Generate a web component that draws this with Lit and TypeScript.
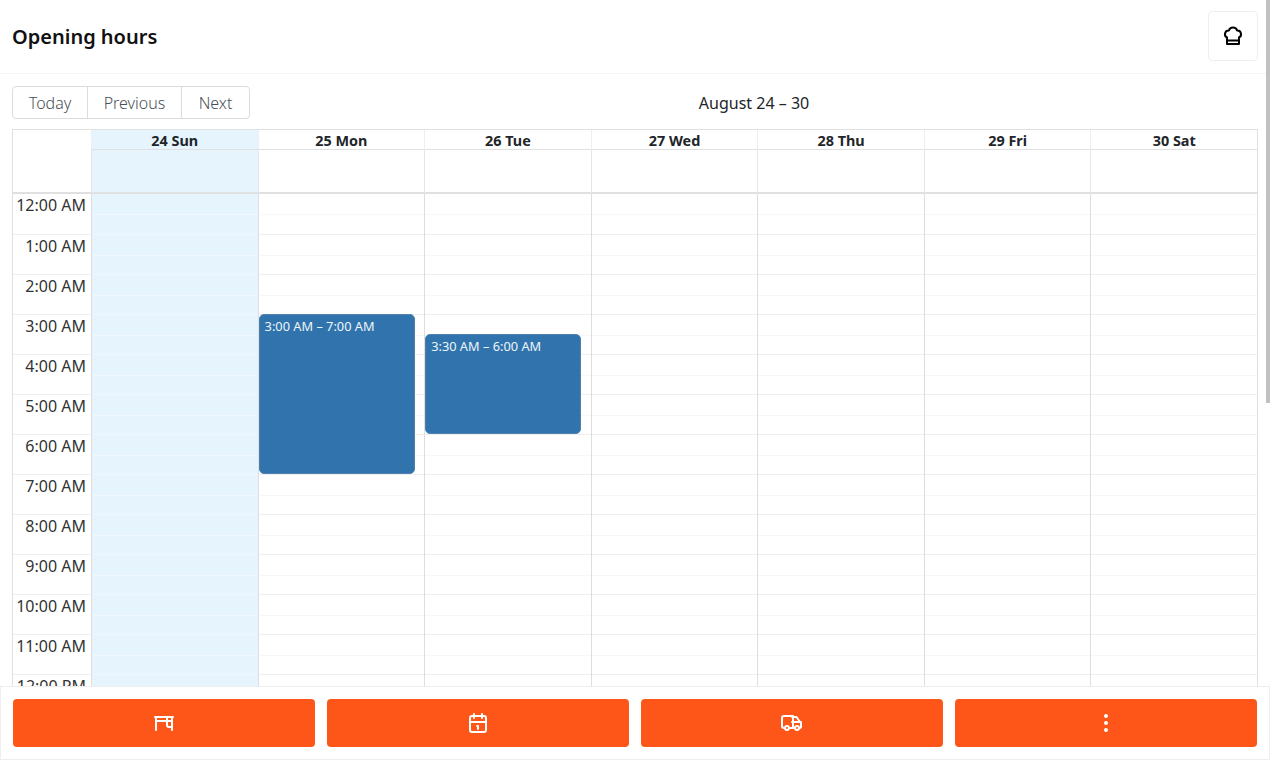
import { LitElement, html, css, svg } from "lit";
import { customElement } from "lit/decorators.js";

const days = ["24 Sun", "25 Mon", "26 Tue", "27 Wed", "28 Thu", "29 Fri", "30 Sat"];
const hours = ["12:00 AM","1:00 AM","2:00 AM","3:00 AM","4:00 AM","5:00 AM","6:00 AM","7:00 AM","8:00 AM","9:00 AM","10:00 AM","11:00 AM","12:00 PM"];
const events: Record<number, { label: string; top: number; height: number }> = {
  1: { label: "3:00 AM – 7:00 AM", top: 120, height: 160 },
  2: { label: "3:30 AM – 6:00 AM", top: 140, height: 100 },
};

const icon = (paths: unknown, size = 24) => html`<svg class="ic" width=${size} height=${size} viewBox="0 0 24 24" fill="none" stroke="currentColor" stroke-width="2" stroke-linecap="round" stroke-linejoin="round">${paths}</svg>`;

const chef = svg`<path d="M12 3.5c2 0 3.6 1.2 4.1 3a3.7 3.7 0 0 1 1.9 7v6.5H6v-6.5a3.7 3.7 0 0 1 1.9-7c.5-1.8 2.1-3 4.1-3z"/><path d="M6.5 16.5h11"/>`;
const desk = svg`<path d="M3 6h18"/><path d="M4 6v13"/><path d="M20 19v-13"/><path d="M4 10h16"/><path d="M15 6v8a2 2 0 0 0 2 2h3"/>`;
const calendar = svg`<path d="M4 7a2 2 0 0 1 2-2h12a2 2 0 0 1 2 2v12a2 2 0 0 1-2 2H6a2 2 0 0 1-2-2z"/><path d="M16 3v4"/><path d="M8 3v4"/><path d="M4 11h16"/><path d="M11 15h1"/><path d="M12 15v3"/>`;
const truck = svg`<circle cx="7" cy="17" r="2"/><circle cx="17" cy="17" r="2"/><path d="M5 17H4a2 2 0 0 1-2-2V7a2 2 0 0 1 2-2h9v12m-4 0h6m4 0h1a1 1 0 0 0 1-1v-5h-9m0-5h4.500l3.500 5"/>`;
const dots = svg`<circle cx="12" cy="5" r="1"/><circle cx="12" cy="12" r="1"/><circle cx="12" cy="19" r="1"/>`;

@customElement("app-root")
export class AppRoot extends LitElement {
  static styles = css`
    :host { display: block; width: 1270px; height: 760px; position: relative; overflow: hidden; background: #fff; font-family: "Noto Sans", sans-serif; color: #212529; }
    * { box-sizing: border-box; }
    .page { display: flex; flex-direction: column; height: 760px; }
    .header { flex: none; height: 74px; display: flex; align-items: center; justify-content: space-between; padding: 0 12px; border-bottom: 1px solid #f1f3f5; }
    .title { font-size: 20px; font-weight: 600; color: #111; letter-spacing: 0; }
    .chef { width: 50px; height: 50px; margin-top: -1px; border: 1px solid #eeeeee; border-radius: 4px; display: flex; align-items: center; justify-content: center; color: #000; }
    .main { flex: 1; min-height: 0; overflow: hidden; padding: 12px 12px 0; }
    .toolbar { display: flex; align-items: center; height: 33px; margin-bottom: 10px; }
    .group { display: flex; }
    .tb { height: 33px; display: flex; align-items: center; justify-content: center; border: 1px solid #dcdcdc; margin-left: -1px; font-size: 16px; color: #495057; font-weight: 300; }
    .tb:first-child { margin-left: 0; border-radius: 4px 0 0 4px; width: 76px; }
    .tb:nth-child(2) { width: 95px; }
    .tb:last-child { border-radius: 0 4px 4px 0; width: 69px; }
    .range { flex: 1; text-align: center; font-size: 16px; color: #212529; }
    .cal { border: 1px solid #e0e0e0; border-bottom: 0; height: 600px; overflow: hidden; }
    .head, .allday, .body { display: grid; grid-template-columns: 78px repeat(7, 1fr); }
    .head { height: 20px; }
    .hcell { border-left: 1px solid #eeeeee; border-bottom: 1px solid #e0e0e0; font-size: 14.4px; font-weight: 700; line-height: 22px; text-align: center; color: #212529; white-space: nowrap; overflow: hidden; }
    .hcell.corner { border-bottom: 0; border-left: 0; }
    .adcell { height: 44px; border-left: 1px solid #e6e6e6; border-bottom: 2px solid #e0e0e0; }
    .adcell.corner { border-left: 0; }
    .today { background: #e6f4fe; }
    .gutter .lab { height: 40px; border-top: 1px solid #f0f0f0; text-align: right; padding-right: 5px; font-size: 16px; line-height: 23px; color: #333; }
    .gutter .lab:first-child { border-top: 0; }
    .col { position: relative; border-left: 1px solid #dedede; }
    .slot { height: 40px; border-top: 1px solid #efefef; position: relative; }
    .slot:first-child { border-top: 0; }
    .slot::after { content: ""; position: absolute; left: 0; right: 0; top: 20px; border-top: 1px solid #f7f7f7; }
    .today .slot { border-top-color: #f0f6fb; }
    .today .slot::after { border-top-color: #f0f8fe; }
    .event { position: absolute; left: 0; width: 156px; background: #3174ad; border: 1px solid #4f81ac; border-radius: 5px; color: #eef4f9; font-size: 12.8px; line-height: 17px; padding: 3px 5px; white-space: nowrap; overflow: hidden; }
    .footer { flex: none; height: 74px; border: 1px solid #eeeeee; background: #fff; padding: 12px; display: grid; grid-template-columns: repeat(4, 1fr); gap: 12px; }
    .btn { height: 48px; background: #fd5618; border-radius: 4px; color: #fff; display: flex; align-items: center; justify-content: center; }
    .scroll { position: absolute; right: 0; top: 0; width: 4px; height: 403px; background: #c1c1c1; }
    .ic { display: block; }
  `;

  render() {
    return html`
      <div class="page">
        <div class="header">
          <div class="title">Opening hours</div>
          <div class="chef">${icon(chef)}</div>
        </div>
        <div class="main">
          <div class="toolbar">
            <div class="group">
              <div class="tb">Today</div><div class="tb">Previous</div><div class="tb">Next</div>
            </div>
            <div class="range">August 24 – 30</div>
          </div>
          <div class="cal">
            <div class="head">
              <div class="hcell corner"></div>
              ${days.map((d, i) => html`<div class="hcell ${i === 0 ? "today" : ""}">${d}</div>`)}
            </div>
            <div class="allday">
              <div class="adcell corner"></div>
              ${days.map((_, i) => html`<div class="adcell ${i === 0 ? "today" : ""}"></div>`)}
            </div>
            <div class="body">
              <div class="gutter">${hours.map((h) => html`<div class="lab">${h}</div>`)}</div>
              ${days.map((_, i) => html`
                <div class="col ${i === 0 ? "today" : ""}">
                  ${hours.map(() => html`<div class="slot"></div>`)}
                  ${events[i] ? html`<div class="event" style="top:${events[i].top}px;height:${events[i].height}px">${events[i].label}</div>` : ""}
                </div>`)}
            </div>
          </div>
        </div>
        <div class="footer">
          <div class="btn">${icon(desk)}</div>
          <div class="btn">${icon(calendar)}</div>
          <div class="btn">${icon(truck)}</div>
          <div class="btn">${icon(dots)}</div>
        </div>
      </div>
      <div class="scroll"></div>
    `;
  }
}
